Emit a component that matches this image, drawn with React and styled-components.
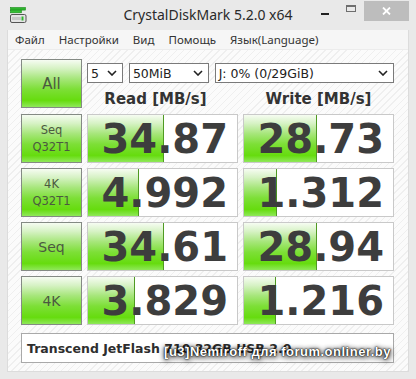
import React from "react";
import styled, { createGlobalStyle } from "styled-components";

const GlobalStyle = createGlobalStyle`
  html, body {
    margin: 0;
    padding: 0;
    background: #e9e9e9;
  }
  body {
    font-family: "DejaVu Sans", sans-serif;
  }
`;

const rows = [
  { label: ["Seq", "Q32T1"], read: "34.87", write: "28.73" },
  { label: ["4K", "Q32T1"], read: "4.992", write: "1.312" },
  { label: ["Seq"], read: "34.61", write: "28.94" },
  { label: ["4K"], read: "3.829", write: "1.216" },
];

const menu = ["Файл", "Настройки", "Вид", "Помощь", "Язык(Language)"];

// crystaldiskmark draws bars on a log scale
const barWidth = (v) => Math.round(149 * ((Math.log10(parseFloat(v)) + 1) / 5));

const Window = styled.div`
  width: 416px;
  height: 379px;
  background: #e9e9e9;
  display: flex;
  flex-direction: column;
  overflow: hidden;
`;

const TitleBar = styled.div`
  height: 30px;
  flex-shrink: 0;
  display: grid;
  grid-template-columns: 1fr auto 1fr;
  align-items: start;
`;

const AppIcon = styled.svg`
  margin: 7px 0 0 10px;
  display: block;
`;

const Title = styled.div`
  font-family: "Noto Sans", sans-serif;
  font-size: 14px;
  line-height: 30px;
  color: #2a2a2a;
  white-space: nowrap;
`;

const Controls = styled.div`
  justify-self: end;
  display: flex;
  margin-right: 7px;
`;

const CaptionButton = styled.div`
  width: ${(p) => p.$w}px;
  height: 20px;
  margin-top: ${(p) => (p.$close ? 1 : 0)}px;
  background: ${(p) => (p.$close ? "#bdbdbd" : "transparent")};
  display: flex;
  align-items: center;
  justify-content: center;
`;

const MinGlyph = styled.div`
  width: 8px;
  height: 2px;
  background: #222;
  margin-top: 8px;
`;

const MaxGlyph = styled.div`
  width: 10px;
  height: 7px;
  box-sizing: border-box;
  border: 1px solid #6e6e6e;
  border-top-width: 2px;
  margin-top: -3px;
`;

const Frame = styled.div`
  flex: 1;
  margin: 0 7px 8px 7px;
  border: 1px solid #dcdcdc;
  border-top: none;
  display: flex;
  flex-direction: column;
`;

const MenuBar = styled.div`
  height: 19px;
  background: #f6f6f6;
  display: flex;
  align-items: center;
  border-bottom: 1px solid #ececec;
`;

const MenuItem = styled.span`
  font-family: "Noto Sans", sans-serif;
  font-size: 11.5px;
  color: #333;
  padding: 0 7px;
`;

const Client = styled.div`
  flex: 1;
  padding: 9px 13px 8px 13px;
  background: repeating-linear-gradient(
    135deg,
    #fbfbfb 0px,
    #fbfbfb 4px,
    #efefef 4px,
    #efefef 5px
  );
  display: flex;
  flex-direction: column;
  gap: 8px;
`;

const Grid = styled.div`
  display: grid;
  grid-template-columns: 61px 151px 151px;
  grid-template-rows: 50px repeat(4, 49px);
  column-gap: 5px;
  row-gap: 5px;
`;

const greenFill = `linear-gradient(
  180deg,
  #f6fcf2 0%,
  #d6f2c4 18%,
  #a6e67a 40%,
  #7ddf37 62%,
  #66dc0e 86%,
  #8fe85a 100%
)`;

const TestButton = styled.div`
  box-sizing: border-box;
  height: 49px;
  border: 1px solid #848a84;
  background: ${greenFill};
  display: flex;
  flex-direction: column;
  align-items: center;
  justify-content: center;
  color: #4b5940;
  font-family: "DejaVu Sans", sans-serif;
  font-size: ${(p) => p.$size}px;
  line-height: ${(p) => (p.$size < 13 ? 17 : 18)}px;
`;

const HeaderArea = styled.div`
  grid-column: 2 / 4;
  display: grid;
  grid-template-columns: 151px 151px;
  column-gap: 5px;
  align-content: start;
  padding-top: 4px;
`;

const SelectRow = styled.div`
  grid-column: 1 / 3;
  display: flex;
  gap: 6px;
`;

const Select = styled.div`
  box-sizing: border-box;
  width: ${(p) => p.$w}px;
  height: 20px;
  border: 1px solid #7a7a7a;
  background: #fff;
  display: flex;
  align-items: center;
  justify-content: space-between;
  padding: 0 5px 0 3px;
  font-family: "DejaVu Sans", sans-serif;
  font-size: 12.5px;
  color: #222;
`;

const ColHead = styled.div`
  text-align: center;
  font-family: "DejaVu Sans", sans-serif;
  font-weight: bold;
  font-size: 15px;
  color: #333;
  margin-top: 7px;
  padding-right: ${(p) => p.$shift || 0}px;
`;

const Cell = styled.div`
  box-sizing: border-box;
  border: 1px solid #c9c9c9;
  background: #fff;
  display: grid;
  grid-template: 1fr / 1fr;
`;

const Bar = styled.div`
  grid-area: 1 / 1;
  justify-self: start;
  height: 100%;
  box-sizing: border-box;
  background: ${greenFill};
  border-right: 1px solid #4f9a22;
`;

const Value = styled.div`
  grid-area: 1 / 1;
  justify-self: end;
  align-self: center;
  padding-right: 9px;
  font-family: "DejaVu Sans", sans-serif;
  font-weight: bold;
  font-size: 40px;
  line-height: 1;
  color: #3d3d3d;
  position: relative;
`;

const CommentBox = styled.div`
  position: relative;
  box-sizing: border-box;
  width: 373px;
  height: 30px;
  border: 1px solid #a9a9a9;
  background: #fff;
  display: flex;
  align-items: center;
  padding-left: 5px;
  font-family: "DejaVu Sans", sans-serif;
  font-weight: bold;
  font-size: 12.5px;
  color: #2e2e2e;
`;

const Watermark = styled.div`
  position: absolute;
  right: 2px;
  top: 10px;
  font-family: "Liberation Sans", sans-serif;
  font-weight: bold;
  font-size: 13px;
  letter-spacing: 0.5px;
  color: #fff;
  white-space: nowrap;
  text-shadow: 0 0 1px #000, 0 0 2px #000, 0 0 5px rgba(0, 0, 0, 0.9),
    1px 2px 6px rgba(0, 0, 0, 0.8);
`;

function Chevron() {
  return (
    <svg width="10" height="6" viewBox="0 0 10 6">
      <path d="M1 1 L5 5 L9 1" fill="none" stroke="#222" strokeWidth="1.6" />
    </svg>
  );
}

function Logo() {
  return (
    <AppIcon width="17" height="17" viewBox="0 0 17 17">
      <rect x="0.5" y="0.5" width="15" height="2.6" fill="#2fb52f" stroke="#1b8d1b" strokeWidth="0.6" />
      <rect x="0.5" y="3.2" width="11" height="2.6" fill="#34c034" stroke="#1b8d1b" strokeWidth="0.6" />
      <rect x="0.5" y="7.5" width="15.5" height="8" rx="1.5" fill="#e4e4e4" stroke="#555" strokeWidth="1" />
      <rect x="2" y="10" width="9" height="3" fill="#c8c8c8" />
      <rect x="11.5" y="9.5" width="2" height="4" fill="#2fb52f" />
    </AppIcon>
  );
}

function CloseGlyph() {
  return (
    <svg width="9" height="8" viewBox="0 0 9 8">
      <path d="M1 0.5 L8 7.5 M8 0.5 L1 7.5" stroke="#fff" strokeWidth="1.8" />
    </svg>
  );
}

export default function App() {
  return (
    <Window>
      <GlobalStyle />
      <TitleBar>
        <Logo />
        <Title>CrystalDiskMark 5.2.0 x64</Title>
        <Controls>
          <CaptionButton $w={27}>
            <MinGlyph />
          </CaptionButton>
          <CaptionButton $w={26}>
            <MaxGlyph />
          </CaptionButton>
          <CaptionButton $w={45} $close>
            <CloseGlyph />
          </CaptionButton>
        </Controls>
      </TitleBar>
      <Frame>
        <MenuBar>
          {menu.map((m) => (
            <MenuItem key={m}>{m}</MenuItem>
          ))}
        </MenuBar>
        <Client>
          <Grid>
            <TestButton $size={15}>All</TestButton>
            <HeaderArea>
              <SelectRow>
                <Select $w={36}>
                  5<Chevron />
                </Select>
                <Select $w={80}>
                  50MiB<Chevron />
                </Select>
                <Select $w={180}>
                  J: 0% (0/29GiB)<Chevron />
                </Select>
              </SelectRow>
              <ColHead $shift={14}>Read [MB/s]</ColHead>
              <ColHead>Write [MB/s]</ColHead>
            </HeaderArea>
            {rows.map((r) => (
              <React.Fragment key={r.label.join("") + r.read}>
                <TestButton $size={r.label.length > 1 ? 11.5 : 14}>
                  {r.label.map((l) => (
                    <span key={l}>{l}</span>
                  ))}
                </TestButton>
                <Cell>
                  <Bar style={{ width: barWidth(r.read) }} />
                  <Value>{r.read}</Value>
                </Cell>
                <Cell>
                  <Bar style={{ width: barWidth(r.write) }} />
                  <Value>{r.write}</Value>
                </Cell>
              </React.Fragment>
            ))}
          </Grid>
          <CommentBox>
            Transcend JetFlash 710 32GB USB 2.0
            <Watermark>[u3]Nemiroff для forum.onliner.by</Watermark>
          </CommentBox>
        </Client>
      </Frame>
    </Window>
  );
}
